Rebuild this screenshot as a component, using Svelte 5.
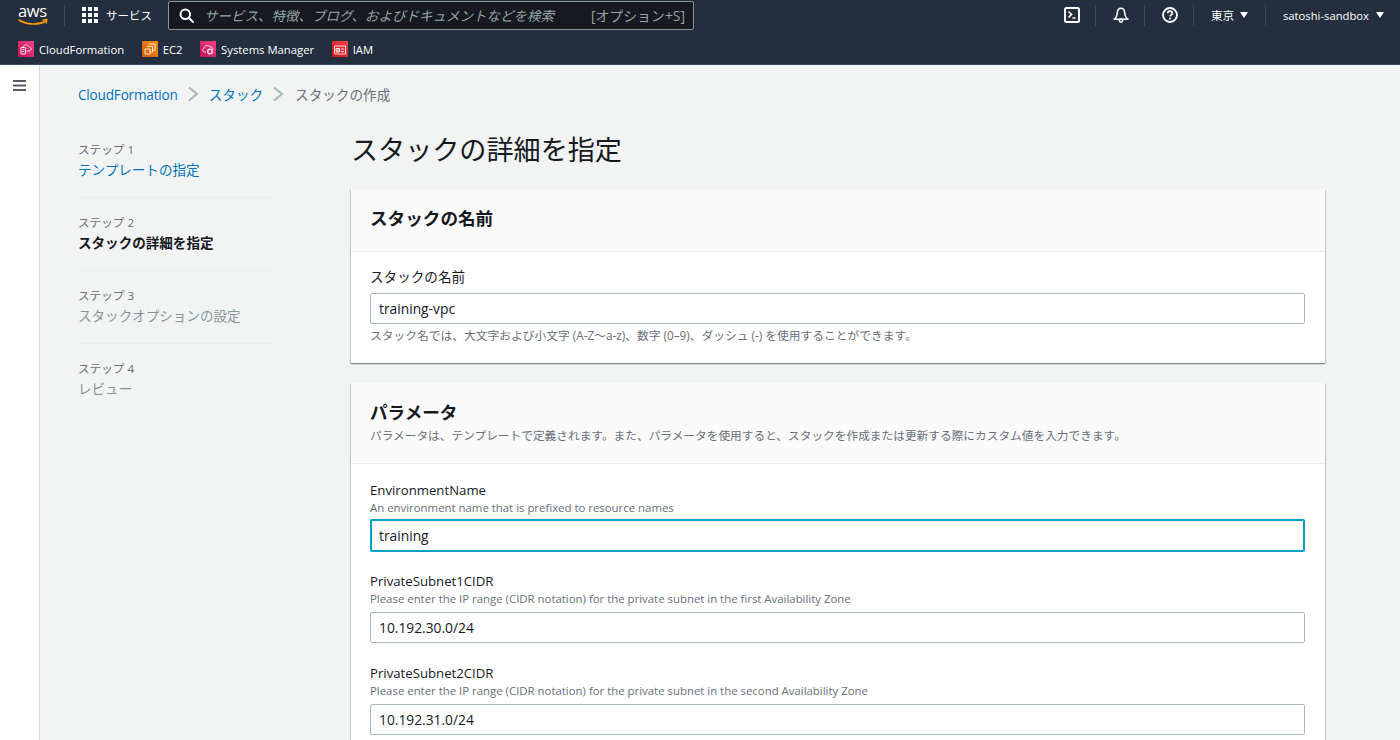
<script>
  const favs = [
    { name: 'CloudFormation', c1: '#f34482', c2: '#bc1356', kind: 'cf' },
    { name: 'EC2', c1: '#f78e04', c2: '#d05c17', kind: 'ec2' },
    { name: 'Systems Manager', c1: '#f34482', c2: '#bc1356', kind: 'sm' },
    { name: 'IAM', c1: '#f54749', c2: '#c7131f', kind: 'iam' }
  ];
  const steps = [
    { n: 'ステップ 1', t: 'テンプレートの指定', cls: 'link' },
    { n: 'ステップ 2', t: 'スタックの詳細を指定', cls: 'active' },
    { n: 'ステップ 3', t: 'スタックオプションの設定', cls: 'off' },
    { n: 'ステップ 4', t: 'レビュー', cls: 'off' }
  ];
  const params = [
    { l: 'EnvironmentName', d: 'An environment name that is prefixed to resource names', v: 'training', focus: true },
    { l: 'PrivateSubnet1CIDR', d: 'Please enter the IP range (CIDR notation) for the private subnet in the first Availability Zone', v: '10.192.30.0/24' },
    { l: 'PrivateSubnet2CIDR', d: 'Please enter the IP range (CIDR notation) for the private subnet in the second Availability Zone', v: '10.192.31.0/24' }
  ];
</script>

<div class="page">
  <header class="nav">
    <div class="row1">
      <div class="logo">
        <span class="awstext">aws</span>
        <svg width="32" height="8" viewBox="0 0 32 8">
          <path d="M1 1c8 5 19 5.500 27 1" fill="none" stroke="#f90" stroke-width="1.500" stroke-linecap="round"/>
          <path d="M25 .9l4-.4-.9 3.500" fill="none" stroke="#f90" stroke-width="1.300" stroke-linecap="round"/>
        </svg>
      </div>
      <span class="vsep first"></span>
      <svg class="grid" width="16" height="16" viewBox="0 0 16 16" fill="#fff">
        {#each [0, 6, 12] as y}{#each [0, 6, 12] as x}<rect {x} {y} width="4" height="4"/>{/each}{/each}
      </svg>
      <span class="svc">サービス</span>
      <div class="search">
        <svg width="15" height="15" viewBox="0 0 15 15" fill="none" stroke="#fff" stroke-width="2"><circle cx="6.300" cy="6.300" r="4.800"/><path d="M10 10l4 4" stroke-linecap="round"/></svg>
        <span class="ph">サービス、特徴、ブログ、およびドキュメントなどを検索</span>
        <span class="key">[オプション+S]</span>
      </div>
      <div class="right">
        <svg class="ic" width="16" height="16" viewBox="0 0 16 16" fill="none" stroke="#fff" stroke-width="2"><rect x="1" y="1" width="14" height="14" rx="1.500"/><path d="M4.500 4.500l3 3-3 3M8.500 11h3" stroke-width="1.700"/></svg>
        <span class="vsep a"></span>
        <svg class="ic b" width="16" height="16" viewBox="0 0 16 16" fill="none" stroke="#fff" stroke-width="1.500"><path d="M1 12.200c2.400-1.300 3-3.200 3.200-6C4.400 3.200 6 1.200 8 1.200s3.600 2 3.800 5c.2 2.800.8 4.700 3.200 6z" stroke-linejoin="round"/><circle cx="8" cy="13.600" r="1.600"/></svg>
        <span class="vsep c"></span>
        <svg class="ic d" width="16" height="16" viewBox="0 0 16 16" fill="none" stroke="#fff" stroke-width="1.800"><circle cx="8" cy="8" r="7"/><path d="M5.700 6.200C5.700 5 6.800 4.100 8 4.100s2.300.9 2.300 2.100c0 1.700-2.300 1.700-2.300 3.400"/><path d="M8 10.800v1.600"/></svg>
        <span class="vsep e"></span>
        <span class="r-txt tokyo">東京</span><span class="tri"></span>
        <span class="vsep f"></span>
        <span class="r-txt user">satoshi-sandbox</span><span class="tri"></span>
      </div>
    </div>
    <div class="row2">
      {#each favs as f, i}
        <div class="fav">
          <svg width="16" height="16" viewBox="0 0 16 16">
            <defs><linearGradient id={'g' + i} x1="0" y1="1" x2="1" y2="0"><stop offset="0" stop-color={f.c2}/><stop offset="1" stop-color={f.c1}/></linearGradient></defs>
            <rect width="16" height="16" fill={'url(#g' + i + ')'}/>
            <g fill="none" stroke="#fff" stroke-width="0.900" stroke-opacity="0.9">
              {#if f.kind === 'cf'}
                <path d="M3 6.500h4.500v6.500H3zM4.300 8.500h2M4.300 10.500h2M5 6.500C5.500 4.200 8 3 10 4.500L13.500 8l-2 2H8.500"/>
              {:else if f.kind === 'ec2'}
                <path d="M6.500 3H13v6.500h-2.500M5 5.500h5.500V11H8M3 8h5v5H3z"/>
              {:else if f.kind === 'sm'}
                <path d="M6 11H4.500C2.500 11 2 8 4 7.300 4.200 4.500 8.300 3.300 9.800 5.800c1.800-.3 3.200 1 3 2.700"/><circle cx="10" cy="10.500" r="2.300" stroke-width="1.300"/>
              {:else}
                <path d="M2.500 5h11v8h-11z"/><path d="M4 7.500h3.500v3.500H4z" fill="#fff" fill-opacity="0.5"/><path d="M9 8h3M9 10.500h3"/>
              {/if}
            </g>
          </svg>
          <span>{f.name}</span>
        </div>
      {/each}
    </div>
  </header>

  <div class="body">
    <aside class="rail">
      <svg width="13" height="11" viewBox="0 0 13 11" fill="none" stroke="#545b64" stroke-width="1.800"><path d="M0 1h13M0 5.500h13M0 10h13"/></svg>
    </aside>
    <main class="main">
      <nav class="crumbs">
        <span class="link latin">CloudFormation</span>
        <svg width="11" height="16" viewBox="0 0 11 16" fill="none" stroke="#aab7b8" stroke-width="2"><path d="M1 1.500l8 6.500-8 6.500"/></svg>
        <span class="link">スタック</span>
        <svg width="11" height="16" viewBox="0 0 11 16" fill="none" stroke="#aab7b8" stroke-width="2"><path d="M1 1.500l8 6.500-8 6.500"/></svg>
        <span class="cur">スタックの作成</span>
      </nav>
      <div class="columns">
        <ol class="steps">
          {#each steps as s}
            <li>
              <div class="num">{s.n}</div>
              <div class={'st ' + s.cls}>{s.t}</div>
            </li>
          {/each}
        </ol>
        <section class="content">
          <h1>スタックの詳細を指定</h1>
          <div class="card">
            <div class="head short"><h2>スタックの名前</h2></div>
            <div class="cbody one">
              <label class="lab cjk" for="n">スタックの名前</label>
              <input id="n" value="training-vpc" />
              <p class="hint">スタック名では、大文字および小文字 (A-Z〜a-z)、数字 (0–9)、ダッシュ (-) を使用することができます。</p>
            </div>
          </div>
          <div class="card">
            <div class="head"><h2>パラメータ</h2><p class="hint narrow">パラメータは、テンプレートで定義されます。また、パラメータを使用すると、スタックを作成または更新する際にカスタム値を入力できます。</p></div>
            <div class="cbody">
              {#each params as p}
                <div class="field" class:ff={p.focus}>
                  <div class="lab">{p.l}</div>
                  <div class="desc">{p.d}</div>
                  <input class:focus={p.focus} value={p.v} aria-label={p.l} />
                </div>
              {/each}
            </div>
          </div>
        </section>
      </div>
    </main>
  </div>
</div>

<style>
  :global(body) { margin: 0; background: #f2f3f3; overflow: hidden; }
  .page { width: 1400px; height: 740px; overflow: hidden; font-family: "Open Sans", "Noto Sans CJK JP", sans-serif; color: #16191f; }
  .nav { height: 65px; background: #232f3e; box-sizing: border-box; border-bottom: 1px solid #3f4b5a; color: #fff; }
  .row1 { height: 30px; display: flex; align-items: center; }
  .logo { margin-left: 17px; width: 34px; height: 24px; flex: none; display: flex; flex-direction: column; padding-left: 1px; box-sizing: border-box; }
  .logo svg { display: block; margin-top: 1px; }
  .awstext { font-size: 16.500px; line-height: 15px; color: #fff; letter-spacing: -0.3px; white-space: nowrap; }
  .vsep { width: 1px; height: 21px; background: #3c4858; flex: none; }
  .vsep.first { margin-left: 13px; }
  .grid { margin-left: 17px; flex: none; }
  .svc { margin-left: 8px; font-size: 11.500px; width: 46px; white-space: nowrap; }
  .search { margin-left: 16px; width: 526px; height: 29px; box-sizing: border-box; border: 1px solid #879596; border-radius: 2px; background: #16191f; display: flex; align-items: center; padding-left: 10px; }
  .ph { margin-left: 10px; font-size: 13.500px; font-style: italic; color: #95a5a6; white-space: nowrap; }
  .key { font-size: 13.900px; color: #95a5a6; margin-left: auto; margin-right: 8px; white-space: nowrap; }
  .right { margin-left: auto; display: flex; align-items: center; }
  .ic { flex: none; margin-right: 15px; }
  .right .a { margin-right: 17px; }
  .right .b { margin-right: 15px; }
  .right .c { margin-right: 17px; }
  .right .d { margin-right: 15px; }
  .right .e { margin-right: 17px; }
  .r-txt { font-size: 11.500px; white-space: nowrap; }
  .user { font-size: 11.250px; }
  .tri { margin-left: 6px; border-left: 4px solid transparent; border-right: 4px solid transparent; border-top: 6px solid #fff; width: 0; height: 0; }
  .tokyo + .tri { margin-right: 17px; }
  .right .f { margin-right: 17px; }
  .user + .tri { margin-right: 16px; margin-left: 7px; }
  .row2 { display: flex; align-items: center; height: 34px; padding-left: 18px; padding-top: 4px; box-sizing: border-box; }
  .fav { display: flex; align-items: center; gap: 5px; font-size: 11.300px; margin-right: 17.500px; white-space: nowrap; }
  .body { display: flex; height: 675px; }
  .rail { width: 40px; flex: none; background: #fff; box-sizing: border-box; border-right: 1px solid #d5dbdb; padding: 15px 0 0 13px; }
  .rail svg { display: block; }
  .main { flex: 1; padding: 0 75px 0 38px; min-width: 0; }
  .crumbs { display: flex; align-items: center; height: 60px; padding-bottom: 2px; box-sizing: border-box; font-size: 13.600px; }
  .crumbs svg { margin: 0 10px; }
  .latin { letter-spacing: -0.2px; }
  .link { color: #0073bb; }
  .cur { color: #687078; margin-left: 1px; }
  .columns { display: flex; }
  .steps { list-style: none; margin: 0 79px 0 0; padding: 0; width: 194px; flex: none; }
  .steps li { height: 73px; box-sizing: border-box; padding-top: 16px; border-bottom: 1px solid #eaeded; }
  .steps li:last-child { border-bottom: none; }
  .num { font-size: 11.600px; color: #687078; line-height: 18px; }
  .st { font-size: 13.550px; line-height: 22px; }
  .st.active { font-weight: 700; color: #16191f; }
  .st.off { color: #879596; }
  .content { flex: 1; min-width: 0; padding-top: 5px; }
  h1 { margin: 0; font-size: 27.100px; font-weight: 400; line-height: 40px; padding: 0 0 19px; }
  h2 { margin: 0; font-size: 17.600px; font-weight: 700; line-height: 24px; }
  .card { background: #fff; box-shadow: 0 1px 1px 0 rgba(0,28,36,.3), 1px 1px 1px 0 rgba(0,28,36,.15), -1px 1px 1px 0 rgba(0,28,36,.15); margin-bottom: 20px; }
  .head { background: #fafafa; border-bottom: 1px solid #eaeded; padding: 17px 20px 0 19px; height: 81px; box-sizing: border-box; }
  .head.short { height: 63px; }
  .cbody { padding: 16px 20px 16px 19px; }
  .cbody.one { padding: 15px 20px 20px 19px; }
  .lab { display: block; font-size: 13.200px; line-height: 20px; color: #16191f; }
  .lab.cjk { font-size: 13.600px; margin-bottom: 6px; }
  .desc { font-size: 11.400px; color: #687078; line-height: 16px; white-space: nowrap; }
  .hint { margin: 3px 0 0; font-size: 11.750px; color: #687078; line-height: 16px; white-space: nowrap; }
  .hint.narrow { font-size: 11.700px; }
  .field { margin-bottom: 20px; }
  .field.ff { margin-bottom: 19px; }
  input { display: block; width: 100%; height: 31px; box-sizing: border-box; border: 1px solid #aab7b8; border-radius: 2px; padding: 0 8px; font: 400 13.800px "Open Sans", sans-serif; color: #16191f; background: #fff; outline: none; margin-top: 5px; }
  .cbody.one input { margin-top: 0; }
  input.focus { border: 2px solid #00a1c9; padding: 0 7px; height: 33px; margin-top: 3px; }
</style>
